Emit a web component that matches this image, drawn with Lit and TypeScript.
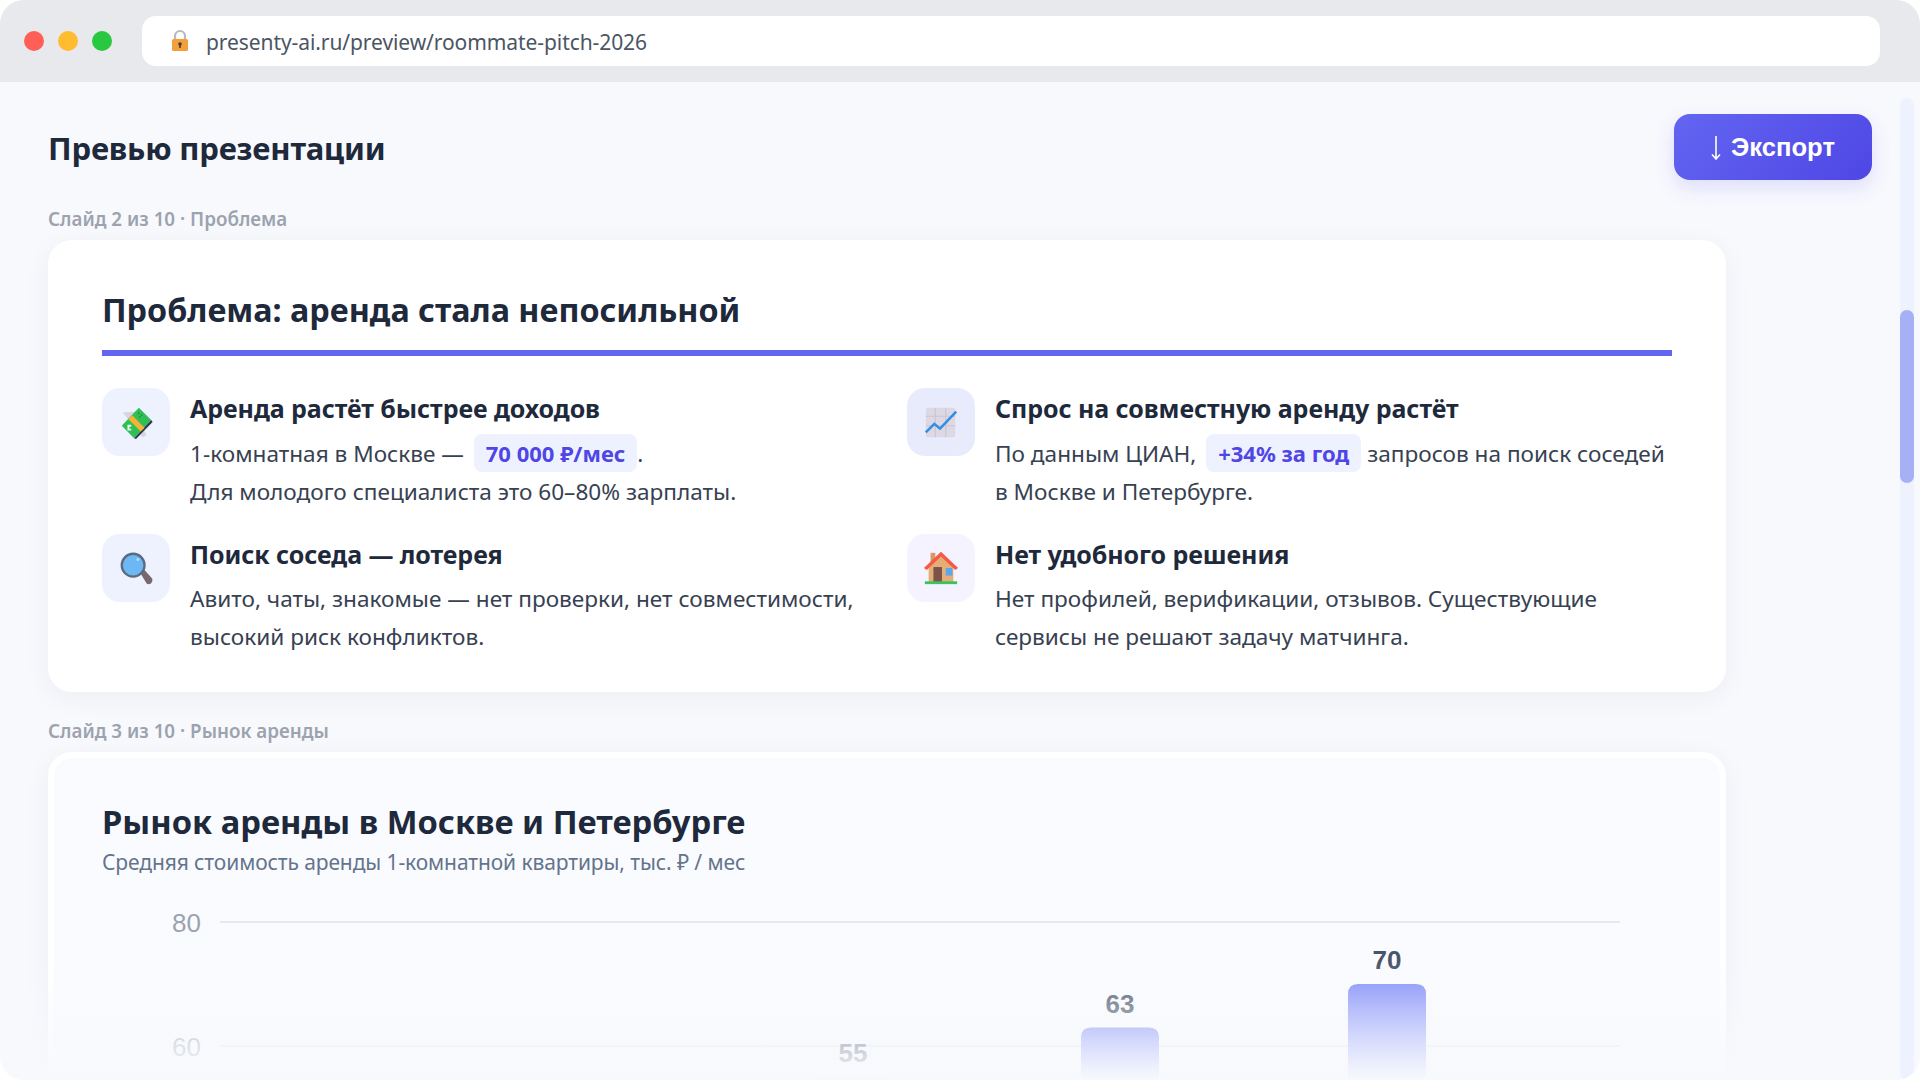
import { LitElement, html, css, svg } from 'lit';
import { customElement } from 'lit/decorators.js';

const moneyIcon = svg`
  <path d="M6 10 L20 9 L31 34 L27 36 Z" fill="#d9d4de"/>
  <path d="M5 24 L23 5 L36 18 L18 37 Z" fill="#2fbf55"/>
  <path d="M18 37 L36 18 L37.5 20 L20 38 Z" fill="#2b3a55"/>
  <path d="M12 17 L16 13 L29 26 L25 30 Z" fill="#f5b335"/>
  <rect x="22" y="10" width="1.6" height="1.6" fill="#1f8c3f"/>
  <rect x="25" y="12" width="1.6" height="1.6" fill="#1f8c3f"/>
  <rect x="23" y="14" width="1.6" height="1.6" fill="#1f8c3f"/>
  <path d="M11 23 h4 v2 h-2 v2 h2 v2 h-4 z" fill="#e9f8ed"/>
`;

const chartIcon = svg`
  <rect x="4" y="5" width="31" height="31" rx="2" fill="#dcd9e4"/>
  <path d="M4 14 H35 M4 24 H35 M14 5 V36 M25 5 V36" stroke="#c9c6d3" stroke-width="1.2"/>
  <path d="M4 31 L13 22 L19 27 L36 9" fill="none" stroke="#2f8ee6" stroke-width="2.6"/>
`;

const searchIcon = svg`
  <path d="M25 26 L29 22 L37 31 Q38 34 36 36 Q33 38 31 36 Z" fill="#77696e"/>
  <circle cx="17" cy="17" r="12" fill="#6cb8f5" stroke="#5c6a80" stroke-width="2.4"/>
  <circle cx="22" cy="11" r="1.6" fill="#b5dcfa"/>
`;

const houseIcon = svg`
  <rect x="9" y="4" width="5" height="14" fill="#d79a66"/>
  <path d="M7 17 L20 5 L33 17 V35 H7 Z" fill="#e5ae78"/>
  <path d="M2 20 L20 3 L38 20 L35 22 L20 8 L5 22 Z" fill="#f55a46"/>
  <rect x="12" y="19" width="9" height="16" fill="#7c5348"/>
  <rect x="25" y="20" width="7" height="8" fill="#5aa8ec"/>
  <rect x="3" y="34" width="34" height="3" fill="#3cc45a"/>
`;

const lockIcon = svg`
  <path d="M6 10 V7 a5 5 0 0 1 10 0 V10" fill="none" stroke="#b9b6c8" stroke-width="2.2"/>
  <rect x="3" y="10" width="16" height="12" rx="1.5" fill="#f2a03c"/>
  <circle cx="11" cy="15" r="1.8" fill="#4a3b35"/>
  <rect x="10.2" y="15" width="1.6" height="4" fill="#4a3b35"/>
`;

const bars = [
  { value: 55, x: 853 },
  { value: 63, x: 1120 },
  { value: 70, x: 1387 },
];

@customElement('app-root')
export class AppRoot extends LitElement {
  static styles = css`
    :host {
      display: block;
      width: 1920px;
      height: 1080px;
      background: #fff;
      overflow: hidden;
      font-family: 'Noto Sans', sans-serif;
      color: #1e293b;
    }
    .window {
      position: relative;
      height: 1080px;
      border-radius: 24px;
      overflow: hidden;
      background: #f8f9fd;
    }
    .topbar {
      height: 82px;
      box-sizing: border-box;
      background: #e8e9ed;
      display: flex;
      align-items: center;
      padding: 0 40px 0 24px;
    }
    .lights {
      display: flex;
      gap: 14px;
      margin-right: 30px;
    }
    .light {
      width: 20px;
      height: 20px;
      border-radius: 50%;
    }
    .red { background: #ff5f57; }
    .yellow { background: #febc2e; }
    .green { background: #28c840; }
    .address {
      flex: 1;
      height: 50px;
      box-sizing: border-box;
      background: #fff;
      border-radius: 14px;
      display: flex;
      align-items: center;
      padding: 2px 0 0 27px;
      font-size: 21px;
      color: #4b5563;
      letter-spacing: -0.08px;
    }
    .address svg {
      width: 22px;
      height: 24px;
      margin: -2px 15px 0 0;
    }
    .main {
      padding: 32px 48px 0;
    }
    .header {
      display: flex;
      justify-content: space-between;
      align-items: center;
      height: 66px;
    }
    h1 {
      margin: 0;
      padding-top: 2px;
      font-size: 31px;
      font-weight: 700;
      letter-spacing: -0.2px;
      color: #1e293b;
    }
    .export {
      width: 198px;
      height: 66px;
      box-sizing: border-box;
      border: 0;
      border-radius: 16px;
      background: linear-gradient(135deg, #6366f1, #4f46e5);
      box-shadow: 0 8px 20px rgba(99, 102, 241, 0.18);
      color: #fff;
      font-family: 'Liberation Sans', sans-serif;
      font-size: 25.6px;
      font-weight: 700;
      padding: 0;
      display: flex;
      align-items: center;
      justify-content: center;
      gap: 10px;
    }
    .export svg {
      width: 10px;
      height: 24px;
      margin-top: 2px;
    }
    .label {
      width: 1678px;
      height: 60px;
      box-sizing: border-box;
      padding-top: 24px;
      font-size: 18.8px;
      font-weight: 600;
      line-height: 30px;
      color: #9ca3af;
    }
    .card {
      width: 1678px;
      box-sizing: border-box;
      background: #fff;
      border-radius: 24px;
      box-shadow: 0 6px 28px rgba(30, 41, 59, 0.05);
    }
    .problem {
      height: 452px;
      padding: 46px 54px 0;
    }
    h2 {
      margin: 0;
      font-size: 32.3px;
      line-height: 46px;
      font-weight: 700;
      color: #1e293b;
    }
    .problem h2 {
      padding-bottom: 18px;
      border-bottom: 6px solid #6366f1;
      margin-bottom: 32px;
    }
    .grid {
      display: grid;
      grid-template-columns: 765px 765px;
      column-gap: 40px;
      row-gap: 23px;
    }
    .item {
      display: flex;
      gap: 20px;
    }
    .icon {
      flex: none;
      width: 68px;
      height: 68px;
      border-radius: 18px;
      background: #eef2ff;
      display: flex;
      align-items: center;
      justify-content: center;
    }
    .icon.dim { background: #e8ebfc; }
    .icon.violet { background: #f5f3ff; }
    .icon svg {
      width: 38px;
      height: 38px;
    }
    h3 {
      margin: 0 0 5px;
      font-size: 25px;
      line-height: 41px;
      font-weight: 700;
      letter-spacing: -0.07px;
      color: #1e293b;
    }
    p {
      margin: 0;
      font-size: 22.6px;
      line-height: 38px;
      color: #374151;
    }
    .pill {
      display: inline-block;
      margin-left: 4px;
      padding: 0 12px;
      height: 38px;
      border-radius: 8px;
      background: #eef2ff;
      color: #4f46e5;
      font-size: 22px;
      font-weight: 700;
    }
    .market {
      height: 400px;
      border: 6px solid #fff;
      background: #fafbff;
      padding: 41px 48px 0;
    }
    .market h2 {
      font-size: 32.7px;
      margin-bottom: 2px;
    }
    .sub {
      font-size: 21px;
      line-height: 30px;
      letter-spacing: -0.1px;
      color: #64748b;
    }
    .chart {
      position: absolute;
      left: 0;
      top: 0;
      pointer-events: none;
    }
    .chart text {
      font-family: 'Liberation Sans', sans-serif;
      font-size: 26px;
    }
    .fade {
      position: absolute;
      left: 0;
      right: 0;
      bottom: 0;
      height: 120px;
      background: linear-gradient(rgba(248, 249, 253, 0), #f8f9fd);
    }
    .track {
      position: absolute;
      left: 1900px;
      top: 98px;
      bottom: 0;
      width: 14px;
      border-radius: 7px;
      background: #eef1fe;
    }
    .thumb {
      position: absolute;
      left: 0;
      top: 212px;
      width: 14px;
      height: 173px;
      border-radius: 7px;
      background: #a6b0f5;
    }
  `;

  renderChart() {
    const y = (v: number) => 922 + (80 - v) * 6.2;
    return html`<svg class="chart" width="1920" height="1080" viewBox="0 0 1920 1080">
      <defs>
        <linearGradient id="bar" x1="0" y1="0" x2="0" y2="1">
          <stop offset="0" stop-color="#818cf8"></stop>
          <stop offset="1" stop-color="#a5b4fc"></stop>
        </linearGradient>
      </defs>
      ${[80, 60].map((v) => svg`
        <line x1="220" x2="1620" y1=${y(v)} y2=${y(v)} stroke="#e5e9f2" stroke-width="2"></line>
        <text x="201" y=${y(v) + 10} text-anchor="end" fill="#9ca3af">${v}</text>
      `)}
      ${bars.map((b) => svg`
        <path d="M${b.x - 39} 1100 V${y(b.value) + 10} q0 -10 10 -10 h58 q10 0 10 10 V1100 Z" fill="url(#bar)"></path>
        <text x=${b.x} y=${y(b.value) - 14.6} text-anchor="middle" font-weight="700" fill="#475569">${b.value}</text>
      `)}
    </svg>`;
  }

  render() {
    return html`
      <div class="window">
        <div class="topbar">
          <div class="lights">
            <span class="light red"></span>
            <span class="light yellow"></span>
            <span class="light green"></span>
          </div>
          <div class="address">
            <svg viewBox="0 0 22 24">${lockIcon}</svg>
            presenty-ai.ru/preview/roommate-pitch-2026
          </div>
        </div>
        <div class="main">
          <div class="header">
            <h1>Превью презентации</h1>
            <button class="export">
              <svg viewBox="0 0 10 24"><path d="M5 0 V23 M1 18.5 L5 23 L9 18.5" fill="none" stroke="#fff" stroke-width="1.6"></path></svg>
              <span>Экспорт</span>
            </button>
          </div>
          <div class="label">Слайд 2 из 10 · Проблема</div>
          <section class="card problem">
            <h2>Проблема: аренда стала непосильной</h2>
            <div class="grid">
              <div class="item">
                <div class="icon"><svg viewBox="0 0 40 40">${moneyIcon}</svg></div>
                <div>
                  <h3>Аренда растёт быстрее доходов</h3>
                  <p>1-комнатная в Москве — <span class="pill">70 000 ₽/мес</span>.<br />Для молодого специалиста это 60–80% зарплаты.</p>
                </div>
              </div>
              <div class="item">
                <div class="icon dim"><svg viewBox="0 0 40 40">${chartIcon}</svg></div>
                <div>
                  <h3>Спрос на совместную аренду растёт</h3>
                  <p>По данным ЦИАН, <span class="pill">+34% за год</span> запросов на поиск соседей в Москве и Петербурге.</p>
                </div>
              </div>
              <div class="item">
                <div class="icon"><svg viewBox="0 0 40 40">${searchIcon}</svg></div>
                <div>
                  <h3>Поиск соседа — лотерея</h3>
                  <p>Авито, чаты, знакомые — нет проверки, нет совместимости, высокий риск конфликтов.</p>
                </div>
              </div>
              <div class="item">
                <div class="icon violet"><svg viewBox="0 0 40 40">${houseIcon}</svg></div>
                <div>
                  <h3>Нет удобного решения</h3>
                  <p>Нет профилей, верификации, отзывов. Существующие сервисы не решают задачу матчинга.</p>
                </div>
              </div>
            </div>
          </section>
          <div class="label">Слайд 3 из 10 · Рынок аренды</div>
          <section class="card market">
            <h2>Рынок аренды в Москве и Петербурге</h2>
            <div class="sub">Средняя стоимость аренды 1-комнатной квартиры, тыс. ₽ / мес</div>
          </section>
        </div>
        ${this.renderChart()}
        <div class="fade"></div>
        <div class="track"><div class="thumb"></div></div>
      </div>
    `;
  }
}
